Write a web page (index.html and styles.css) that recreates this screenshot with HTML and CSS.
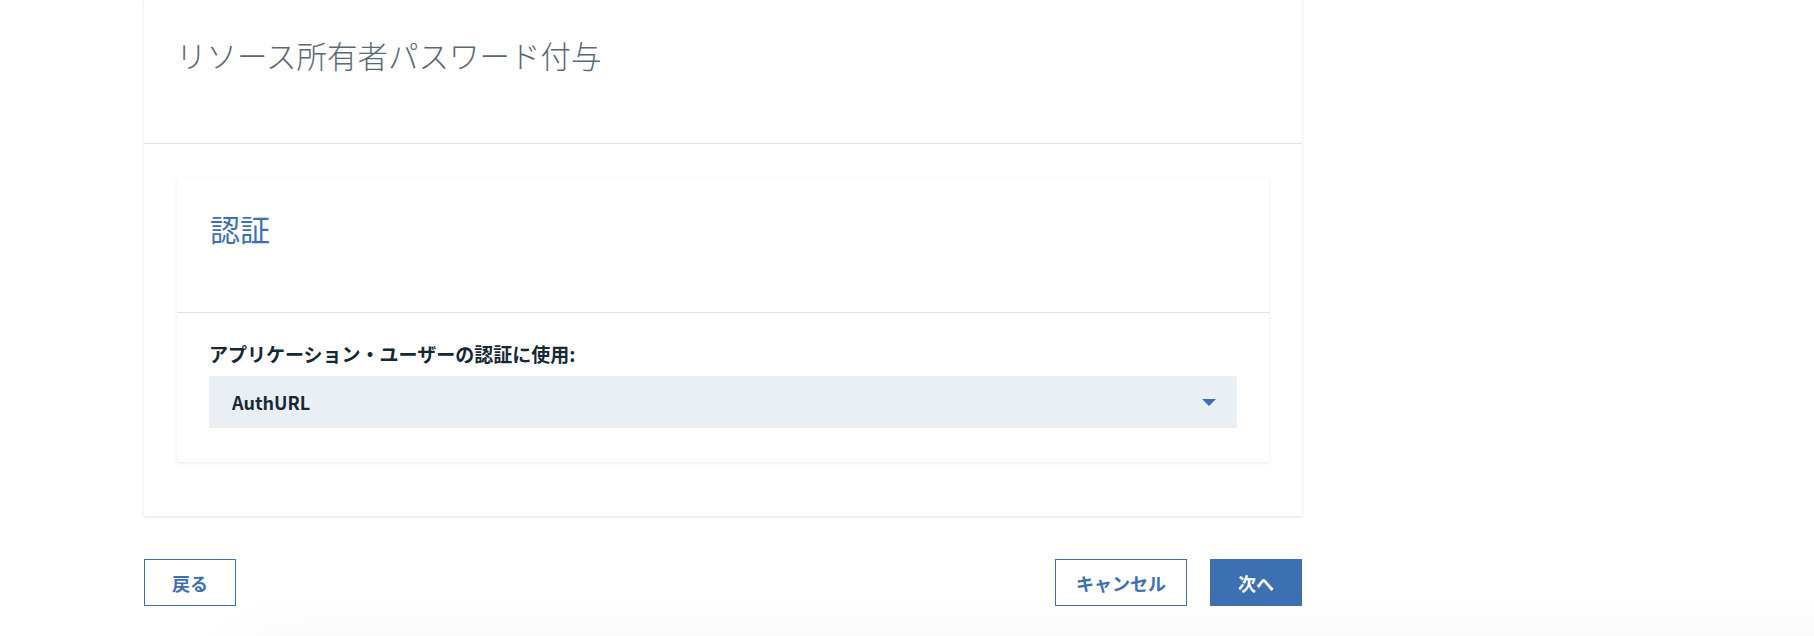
FILE: index.html
```html
<!DOCTYPE html>
<html lang="ja">
<head>
<meta charset="utf-8">
<title>リソース所有者パスワード付与</title>
<link rel="stylesheet" href="styles.css">
</head>
<body>
<main class="page">
  <section class="card">
    <header class="card-header">
      <h1 class="card-title">リソース所有者パスワード付与</h1>
    </header>
    <div class="card-body">
      <section class="tile">
        <header class="tile-header">
          <h2 class="tile-title">認証</h2>
        </header>
        <div class="tile-body">
          <label class="field-label" for="auth">アプリケーション・ユーザーの認証に使用:</label>
          <div class="select" id="auth">
            <span class="select-value">AuthURL</span>
            <svg class="select-arrow" width="14" height="7" viewBox="0 0 14 7" aria-hidden="true"><polygon points="0,0 14,0 7,7" fill="#3d70b2"/></svg>
          </div>
        </div>
      </section>
    </div>
  </section>
  <nav class="actions">
    <button class="btn btn-secondary" type="button">戻る</button>
    <div class="actions-right">
      <button class="btn btn-secondary btn-wide" type="button">キャンセル</button>
      <button class="btn btn-primary" type="button">次へ</button>
    </div>
  </nav>
  <div class="footer-shade"></div>
</main>
</body>
</html>
```
FILE: styles.css
```css
html, body {
  margin: 0;
  padding: 0;
  background: #ffffff;
  overflow: hidden;
}
body {
  font-family: "Noto Sans CJK JP", "Noto Sans", sans-serif;
  color: #152935;
}
.page {
  width: 1158px;
  padding-left: 144px;
}
.card {
  background: #ffffff;
  box-shadow: 0 1px 3px rgba(0, 0, 0, 0.12);
}
.card-header {
  height: 144px;
  box-sizing: border-box;
  padding: 35px 32px 0 32px;
  border-bottom: 1px solid #dfe3e6;
}
.card-title {
  margin: 0;
  font-size: 30.5px;
  line-height: 40px;
  font-weight: 300;
  color: #5a6872;
}
.card-body {
  padding: 33px 33px 54px 33px;
}
.tile {
  background: #ffffff;
  box-shadow: 0 1px 3px rgba(0, 0, 0, 0.1);
}
.tile-header {
  height: 136px;
  box-sizing: border-box;
  padding: 19px 32px 0 33px;
  border-bottom: 1px solid #dfe3e6;
}
.tile-title {
  margin: 0;
  font-size: 30px;
  line-height: 64px;
  font-weight: 400;
  color: #3d70b2;
}
.tile-body {
  padding: 29px 32px 34px 32px;
  display: flex;
  flex-direction: column;
}
.field-label {
  font-size: 19px;
  line-height: 24px;
  font-weight: 700;
  color: #152935;
  margin-bottom: 10px;
}
.select {
  height: 52px;
  background: #eaeef5;
  display: flex;
  align-items: center;
  justify-content: space-between;
  padding: 0 21px 0 23px;
}
.select-value {
  font-size: 18px;
  font-weight: 700;
  color: #152935;
}
.select-arrow {
  display: block;
}
.actions {
  margin-top: 43px;
  display: flex;
  justify-content: space-between;
  align-items: center;
}
.actions-right {
  display: flex;
  gap: 23px;
}
.btn {
  height: 47px;
  min-width: 92px;
  box-sizing: border-box;
  padding: 0 20px;
  font-family: "Noto Sans CJK JP", "Noto Sans", sans-serif;
  font-size: 18px;
  font-weight: 700;
  border: 1px solid #3d70b2;
  cursor: pointer;
}
.btn-secondary {
  background: #ffffff;
  color: #3d70b2;
}
.btn-wide {
  min-width: 131px;
}
.btn-primary {
  background: #3d70b2;
  color: #ffffff;
}
.footer-shade {
  margin-top: 56px;
  margin-left: 110px;
  width: 2000px;
  height: 200px;
  background: #f2f2f2;
  box-shadow: 0 0 70px 10px rgba(0, 0, 0, 0.06);
}
```
